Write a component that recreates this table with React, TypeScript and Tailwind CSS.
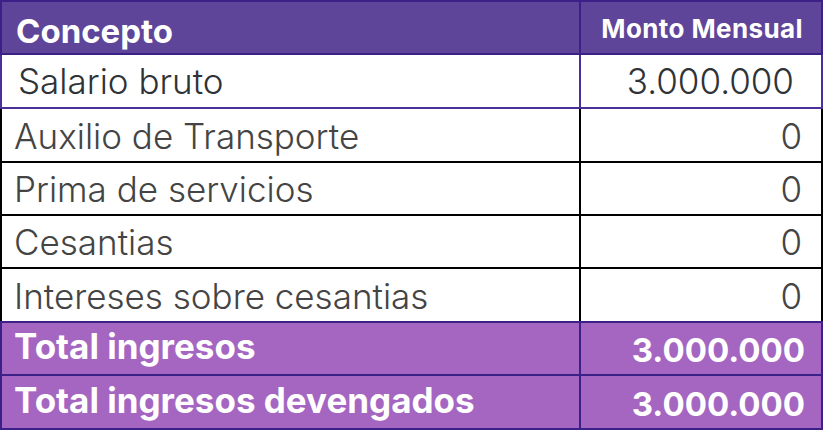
const rows = [
  { label: "Auxilio de Transporte", value: "0", h: "h-[54px]", b: "border-b-2" },
  { label: "Prima de servicios", value: "0", h: "h-[53px]", b: "border-b-2" },
  { label: "Cesantias", value: "0", h: "h-[53px]", b: "border-b-2" },
  { label: "Intereses sobre cesantias", value: "0", h: "h-[52px]", b: "border-b-0" },
];

const totals = [
  { label: "Total ingresos", value: "3.000.000", cls: "h-[55px] border-2" },
  { label: "Total ingresos devengados", value: "3.000.000", cls: "h-[54px] border-x-2 border-b-2" },
];

export default function App() {
  return (
    <div className="w-[825px] h-[432px] bg-white font-['Inter','Noto_Sans',sans-serif]">
      <div className="w-[823px] flex flex-col">
        {/* Header */}
        <div className="flex h-[55px] bg-[#5e459a] border-2 border-[#3b2088] text-white font-bold">
          <div className="w-[579px] border-r-2 border-[#3b2088] flex items-center pl-[14px] pt-[8px] text-[33px] leading-none">
            Concepto
          </div>
          <div className="flex-1 flex items-center justify-end pr-[18px] pt-[2px] text-[26px] tracking-[0.4px] leading-none">
            Monto Mensual
          </div>
        </div>

        {/* Salario */}
        <div className="flex h-[54px] border-x-2 border-b-2 border-[#4b2f9a] text-[#2f3337] text-[35px] font-light leading-none">
          <div className="w-[579px] border-r-2 border-[#4b2f9a] flex items-center pl-[16px]">
            Salario bruto
          </div>
          <div className="flex-1 flex items-center justify-end pr-[27px]">3.000.000</div>
        </div>

        {/* Body rows */}
        {rows.map((r) => (
          <div
            key={r.label}
            className={`flex ${r.h} border-x-2 ${r.b} border-black text-[#444444] text-[35px] font-light leading-none`}
          >
            <div className="w-[579px] border-r-2 border-black flex items-center pl-[12px] pt-[2px]">
              {r.label}
            </div>
            <div className="flex-1 flex items-center justify-end pr-[19px] pt-[2px]">{r.value}</div>
          </div>
        ))}

        {/* Totals */}
        {totals.map((t) => (
          <div
            key={t.label}
            className={`flex ${t.cls} border-[#3b2088] bg-[#a566c2] text-white font-bold leading-none`}
          >
            <div className="w-[579px] border-r-2 border-[#3b2088] flex items-center pl-[12px] pb-[4px] text-[35px]">
              {t.label}
            </div>
            <div className="flex-1 flex items-center justify-end pr-[16px] pt-[4px] text-[33px]">{t.value}</div>
          </div>
        ))}
      </div>
    </div>
  );
}
